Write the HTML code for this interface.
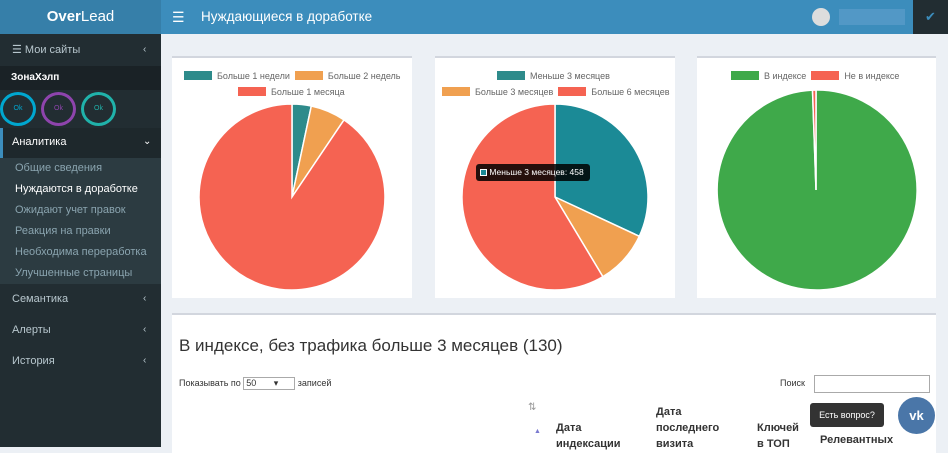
<!DOCTYPE html>
<html><head><meta charset="utf-8"><style>
*{box-sizing:border-box;margin:0;padding:0}
body{width:948px;height:447px;overflow:hidden;background:#ecf0f5;font-family:"Liberation Sans",sans-serif;position:relative}
.abs{position:absolute}
.sb{left:0;top:0;width:161px;height:447px;background:#222d32}
.logo{left:0;top:0;width:161px;height:34px;background:#367fa9;color:#fff;font-size:15px;font-weight:bold;text-align:center;line-height:34px}
.logo span{font-weight:normal}
.hdr{left:161px;top:0;width:787px;height:34px;background:#3c8dbc;color:#fff}
.box{background:#fff;border-top:2px solid #d2d6de}
.sbtext{color:#b8c7ce;font-size:11px}
.sub{color:#8aa4af;font-size:11px;left:15px}
.leg{font-size:9px;color:#666;white-space:nowrap}
.leg i{display:inline-block;width:28px;height:9px;vertical-align:-1px;margin-right:5px}
.chev{color:#b8c7ce;font-size:10px;left:143px}
</style></head><body>
<div class="abs sb"></div>
<div class="abs logo">Over<span>Lead</span></div>
<div class="abs hdr">
 <div class="abs" style="left:11px;top:9px;font-size:14px">&#9776;</div>
 <div class="abs" style="left:40px;top:9px;font-size:13.5px">Нуждающиеся в доработке</div>
 <div class="abs" style="left:651px;top:8px;width:18px;height:18px;border-radius:50%;background:#ddd"></div>
 <div class="abs" style="left:678px;top:9px;width:66px;height:16px;background:#5b9ccb;opacity:.7"></div>
 <div class="abs" style="left:752px;top:0;width:35px;height:34px;background:#222d32;color:#3c8dbc;text-align:center;line-height:34px;font-size:13px">✔</div>
</div>
<div class="abs sbtext" style="left:12px;top:43px;font-size:11px;color:#b8c7ce">&#9776; Мои сайты</div>
<div class="abs chev" style="top:44px">&lsaquo;</div>
<div class="abs" style="left:0;top:66px;width:161px;height:24px;background:#1a2226"></div>
<div class="abs" style="left:11px;top:72px;color:#fff;font-size:10px;font-weight:bold">ЗонаХэлп</div>
<div class="abs" style="left:0;top:92px;width:36px;height:34px;border:3px solid #00a7d0;border-radius:50%;color:#00a7d0;font-size:7px;text-align:center;line-height:28px">Ok</div>
<div class="abs" style="left:41px;top:92px;width:35px;height:34px;border:3px solid #8e44ad;border-radius:50%;color:#8e44ad;font-size:7px;text-align:center;line-height:28px">Ok</div>
<div class="abs" style="left:81px;top:92px;width:35px;height:34px;border:3px solid #20b2aa;border-radius:50%;color:#20b2aa;font-size:7px;text-align:center;line-height:28px">Ok</div>
<div class="abs" style="left:0;top:128px;width:161px;height:30px;background:#1e282c;border-left:3px solid #3c8dbc"></div>
<div class="abs" style="left:12px;top:136px;color:#fff;font-size:11px">Аналитика</div>
<div class="abs chev" style="top:136px;color:#fff">&#8964;</div>
<div class="abs" style="left:0;top:158px;width:161px;height:126px;background:#2c3b41"></div>
<div class="abs sub" style="top:162px">Общие сведения</div>
<div class="abs sub" style="top:183px;color:#fff">Нуждаются в доработке</div>
<div class="abs sub" style="top:204px">Ожидают учет правок</div>
<div class="abs sub" style="top:225px">Реакция на правки</div>
<div class="abs sub" style="top:246px">Необходима переработка</div>
<div class="abs sub" style="top:267px">Улучшенные страницы</div>
<div class="abs sbtext" style="left:12px;top:293px">Семантика</div><div class="abs chev" style="top:293px">&lsaquo;</div>
<div class="abs sbtext" style="left:12px;top:324px">Алерты</div><div class="abs chev" style="top:324px">&lsaquo;</div>
<div class="abs sbtext" style="left:12px;top:355px">История</div><div class="abs chev" style="top:355px">&lsaquo;</div>

<div class="abs box" style="left:172px;top:56px;width:240px;height:242px"></div>
<div class="abs box" style="left:435px;top:56px;width:240px;height:242px"></div>
<div class="abs box" style="left:697px;top:56px;width:239px;height:242px"></div>
<div class="abs box" style="left:172px;top:313px;width:764px;height:140px"></div>

<div class="abs leg" style="left:184px;top:71px"><i style="background:#2e8b8b"></i>Больше 1 недели &nbsp;<i style="background:#f0a050"></i>Больше 2 недель</div>
<div class="abs leg" style="left:238px;top:87px"><i style="background:#f56352"></i>Больше 1 месяца</div>
<div class="abs leg" style="left:497px;top:71px"><i style="background:#2e8b8b"></i>Меньше 3 месяцев</div>
<div class="abs leg" style="left:442px;top:87px"><i style="background:#f0a050"></i>Больше 3 месяцев &nbsp;<i style="background:#f56352"></i>Больше 6 месяцев</div>
<div class="abs leg" style="left:731px;top:71px"><i style="background:#3fa94a"></i>В индексе &nbsp;<i style="background:#f56352"></i>Не в индексе</div>

<svg class="abs" style="left:0;top:0" width="948" height="447">
<g stroke="#fff" stroke-width="1.5">
<path d="M292 197 L292 104 A93 93 0 0 1 311.3 106 Z" fill="#2e8b8b"/>
<path d="M292 197 L311.3 106 A93 93 0 0 1 344 119.9 Z" fill="#f0a050"/>
<path d="M292 197 L344 119.9 A93 93 0 1 1 292 104 Z" fill="#f56352"/>
<path d="M555 197 L555 104 A93 93 0 0 1 639.3 236.3 Z" fill="#1b8a96"/>
<path d="M555 197 L639.3 236.3 A93 93 0 0 1 602.9 276.7 Z" fill="#f0a050"/>
<path d="M555 197 L602.9 276.7 A93 93 0 1 1 555 104 Z" fill="#f56352"/>
<path d="M816 190 L816 90 A100 100 0 1 1 812.5 90.1 Z" fill="#3fa94a"/>
<path d="M816 190 L812.5 90.1 A100 100 0 0 1 816 90 Z" fill="#f56352"/>
</g>
</svg>
<div class="abs" style="left:476px;top:164px;width:114px;height:17px;background:rgba(0,0,0,.85);color:#fff;font-size:8.5px;line-height:17px;padding-left:4px;border-radius:3px"><span style="display:inline-block;width:7px;height:7px;background:#1b8a96;border:1px solid #fff;vertical-align:-1px"></span> Меньше 3 месяцев: 458</div>

<div class="abs" style="left:179px;top:336px;font-size:17px;color:#333">В индексе, без трафика больше 3 месяцев (130)</div>
<div class="abs" style="left:179px;top:377px;font-size:9px;color:#333">Показывать по <span style="display:inline-block;width:52px;height:13px;border:1px solid #aaa;padding-left:2px;vertical-align:middle">50 &nbsp;&nbsp;&nbsp;&nbsp;&nbsp;&nbsp;&#9662;</span> записей</div>
<div class="abs" style="left:780px;top:378px;font-size:9px;color:#333">Поиск</div>
<div class="abs" style="left:814px;top:375px;width:116px;height:18px;border:1px solid #aaa;background:#fff"></div>
<div class="abs" style="left:528px;top:402px;font-size:10px;color:#999">&#8645;</div>
<div class="abs" style="left:534px;top:428px;font-size:7px;color:#7a7ad0">&#9650;</div>
<div class="abs" style="left:556px;top:420px;font-size:11px;color:#333;font-weight:bold;line-height:16px">Дата<br>индексации</div>
<div class="abs" style="left:656px;top:404px;font-size:11px;color:#333;font-weight:bold;line-height:16px">Дата<br>последнего<br>визита</div>
<div class="abs" style="left:757px;top:420px;font-size:11px;color:#333;font-weight:bold;line-height:16px">Ключей<br>в ТОП</div>
<div class="abs" style="left:820px;top:434px;font-size:11px;color:#333;font-weight:bold">Релевантных</div>
<div class="abs" style="left:810px;top:403px;width:74px;height:24px;background:#333;color:#fff;font-size:9px;line-height:24px;text-align:center;border-radius:3px">Есть вопрос?</div>
<div class="abs" style="left:898px;top:397px;width:37px;height:37px;border-radius:50%;background:#4a76a8;color:#fff;font-weight:bold;font-size:13px;text-align:center;line-height:37px">vk</div>
</body></html>
